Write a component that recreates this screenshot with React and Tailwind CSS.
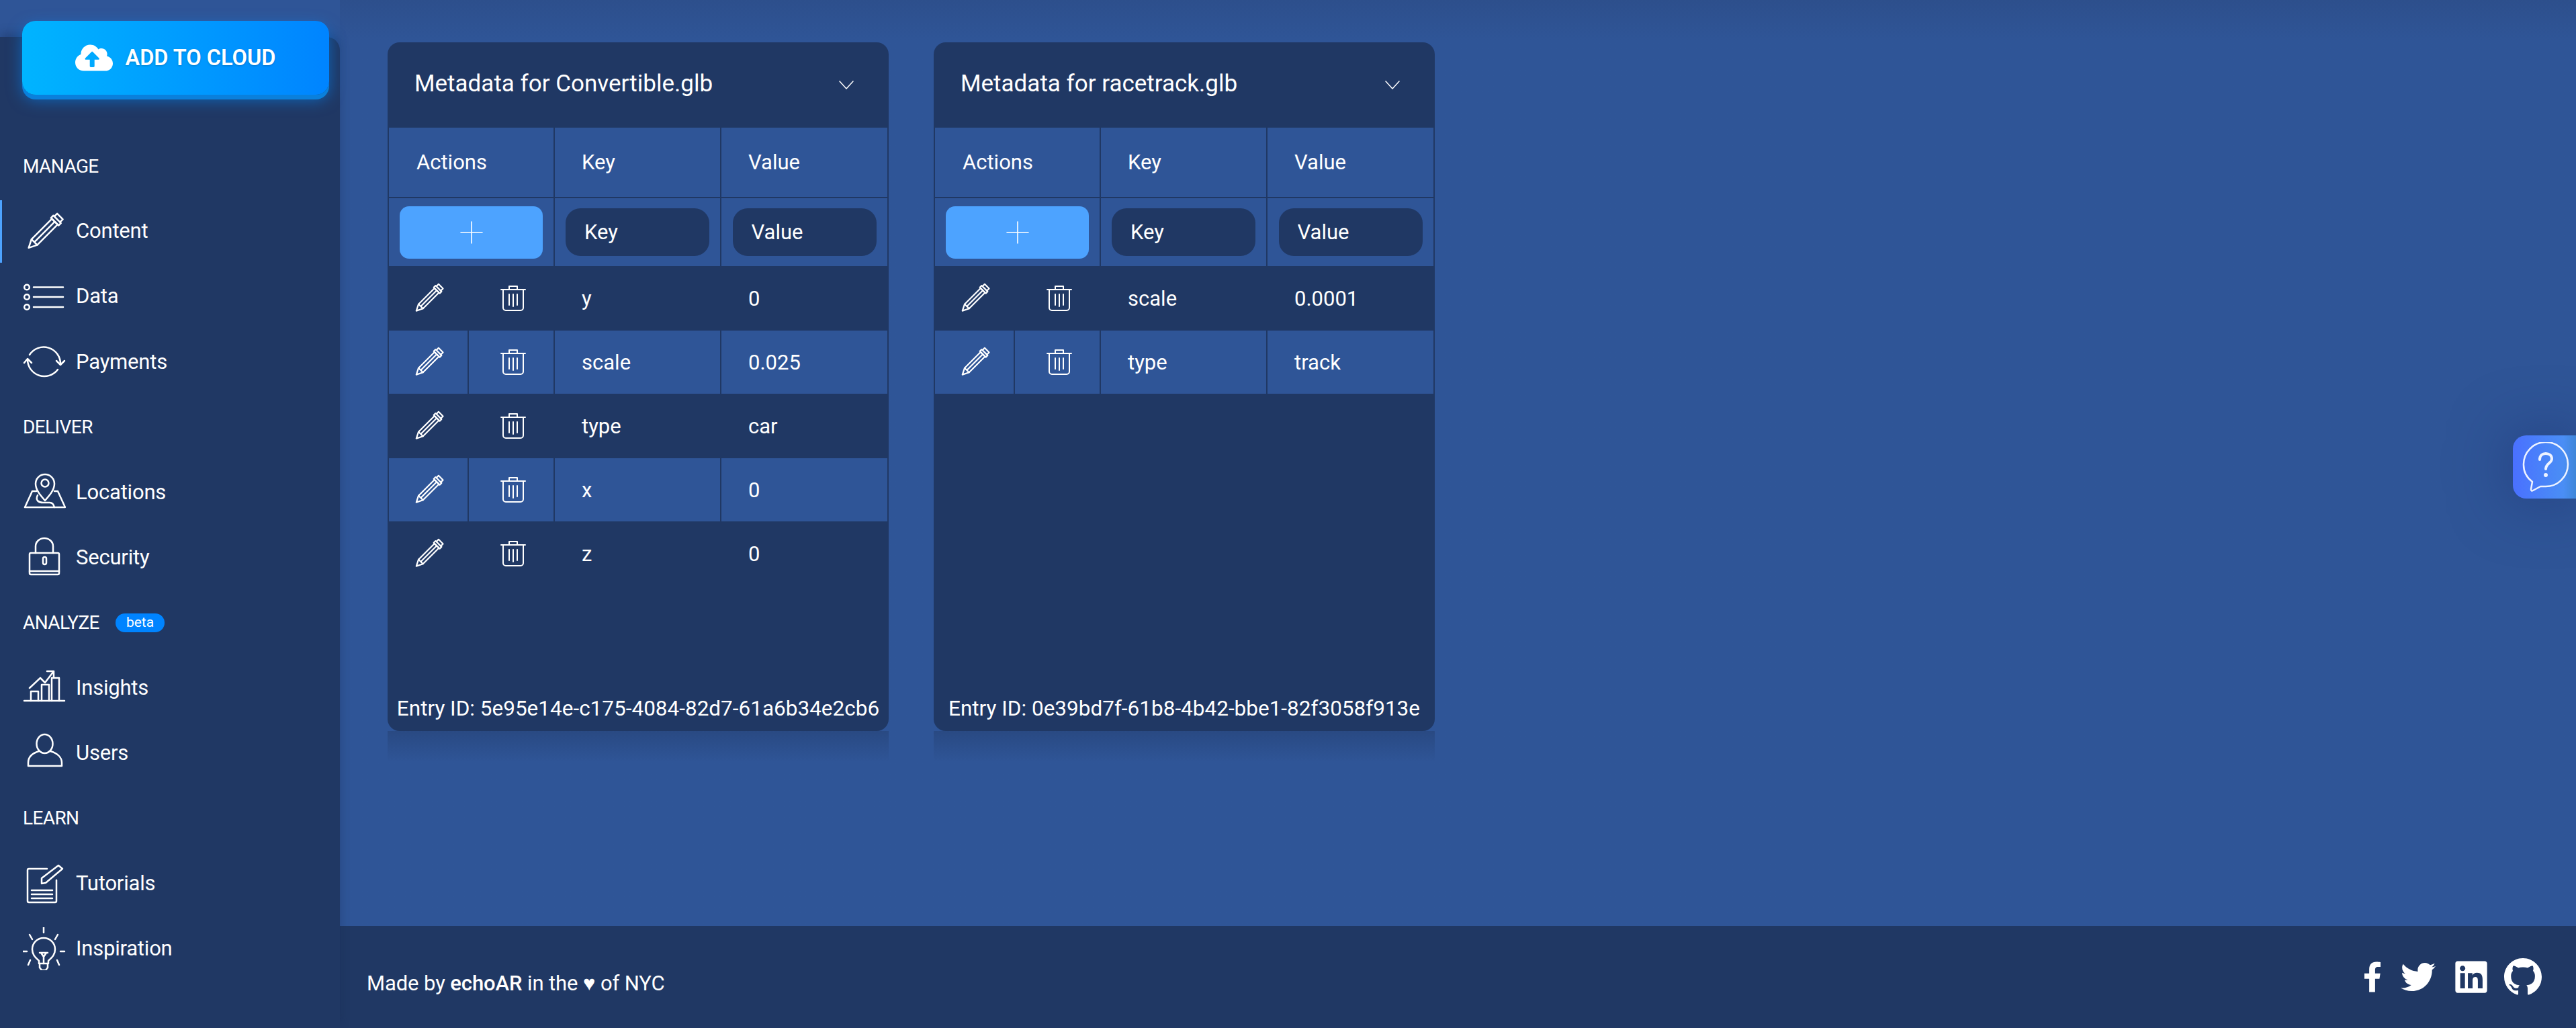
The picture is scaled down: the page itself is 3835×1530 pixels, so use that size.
import { FaCloudUploadAlt, FaFacebookF, FaTwitter, FaLinkedin } from "react-icons/fa";

const Stroke = ({ children, className = "w-[64px] h-[64px]", box = "0 0 64 64", width = 2.5 }) => (
  <svg
    className={className}
    viewBox={box}
    fill="none"
    stroke="currentColor"
    strokeWidth={width}
    strokeLinecap="round"
    strokeLinejoin="round"
  >
    {children}
  </svg>
);

const pencil = (
  <g transform="translate(32 32.5) rotate(45)">
    <path d="M-6 -22V21L0 33L6 21V-22Z" />
    <path d="M0 -22V21M-6 21H6" />
    <path d="M-8 -22H8V-27H-8Z" />
    <path d="M-6 -27V-33H6V-27" />
  </g>
);

const navIcons = {
  content: <Stroke>{pencil}</Stroke>,
  data: (
    <Stroke>
      <circle cx="6" cy="17.5" r="3.8" />
      <circle cx="6" cy="32" r="3.8" />
      <circle cx="6" cy="47" r="3.8" />
      <path d="M16 17.5H60M16 32H60M16 47H60" />
    </Stroke>
  ),
  payments: (
    <Stroke>
      <path d="M10 21A25 25 0 0 1 56 35M50 30L56 36L62 30" />
      <path d="M52 43A25 25 0 0 1 7 28M2 33L7 27L13 33" />
    </Stroke>
  ),
  locations: (
    <Stroke>
      <path d="M33 44C26 36 19 28 19 19A14 14 0 0 1 47 19C47 28 40 36 33 44Z" />
      <circle cx="33" cy="18" r="5.5" />
      <path d="M20 30H14L3 54H63L52 30H47" />
      <path d="M22 36C18 44 24 47 30 47H40C44 47 46 50 47 54" />
    </Stroke>
  ),
  security: (
    <Stroke>
      <path d="M19 25V15A13 12 0 0 1 45 15V25" />
      <rect x="10" y="25" width="44" height="32" rx="2" />
      <path d="M10 52H54" />
      <rect x="30" y="31" width="5" height="11" rx="2.5" />
    </Stroke>
  ),
  insights: (
    <Stroke>
      <path d="M2 51H62" />
      <path d="M12 51V37H23V51M28 51V27H39V51M43 51V17H54V51" />
      <path d="M10 32L26 17L33 24L46 7M36 7H46V17" />
    </Stroke>
  ),
  users: (
    <Stroke>
      <ellipse cx="32.5" cy="18" rx="12" ry="14" />
      <path d="M24 29C14 32 8 38 8 46V51H58V46C58 38 51 32 41 29" />
    </Stroke>
  ),
  tutorials: (
    <Stroke>
      <path d="M36 10H9A2 2 0 0 0 7 12V58A2 2 0 0 0 9 60H48A2 2 0 0 0 50 58V27" />
      <path d="M28 32V24L53 5L59 10L34 31Z" />
      <path d="M13 42H44M13 48H44M13 54H44" />
    </Stroke>
  ),
  inspiration: (
    <Stroke>
      <path d="M31 0V8M10 11L14 18M52 11L48 18M0 36H6M56 36H62M8 56L11 49M54 56L51 49" />
      <path d="M24 54V50C20 46 14 42 14 33A17 17 0 0 1 48 33C48 42 42 46 38 50V54Z" />
      <path d="M25 38H37M27 38L31 44L35 38M31 44V54M25 54V60L28 64H34L37 60V54" />
    </Stroke>
  ),
};

const sidebar = [
  { heading: "MANAGE" },
  { id: "content", label: "Content", active: true },
  { id: "data", label: "Data" },
  { id: "payments", label: "Payments" },
  { heading: "DELIVER" },
  { id: "locations", label: "Locations" },
  { id: "security", label: "Security" },
  { heading: "ANALYZE", beta: true },
  { id: "insights", label: "Insights" },
  { id: "users", label: "Users" },
  { heading: "LEARN" },
  { id: "tutorials", label: "Tutorials" },
  { id: "inspiration", label: "Inspiration" },
];

function Sidebar() {
  return (
    <aside className="relative z-10 w-[506px] shrink-0 mt-[55px] bg-[#203864] rounded-tr-[20px] shadow-[0_-6px_14px_rgba(20,40,80,0.35)]">
      <button className="flex items-center justify-center gap-[18px] w-[457px] h-[110px] ml-[33px] -mt-[24px] mb-[58px] rounded-[20px] bg-gradient-to-r from-[#00b4ff] to-[#0084ff] text-white font-semibold text-[32.5px] shadow-[0_7px_0_#0a80dc,0_8px_22px_rgba(0,140,255,0.55)] [text-shadow:0_1px_3px_rgba(0,0,0,0.2)]">
        <FaCloudUploadAlt className="w-[56px] h-[56px]" />
        ADD TO CLOUD
      </button>
      <div className="flex flex-col text-white">
        {sidebar.map((item) =>
          item.heading ? (
            <div key={item.heading} className="flex items-center h-[97.08px] pl-[34px] text-[28px] font-normal tracking-[-0.6px]">
              {item.heading}
              {item.beta && (
                <span className="flex items-center ml-[24px] h-[28px] px-[16px] rounded-full bg-[#0084ff] text-[21px] font-normal tracking-normal">
                  beta
                </span>
              )}
            </div>
          ) : (
            <div
              key={item.id}
              className={`flex items-center h-[97.08px] pl-[34px] text-[31px] font-normal tracking-[-0.2px] relative ${
                item.active ? "before:absolute before:left-0 before:top-[2px] before:bottom-[2px] before:w-[3px] before:bg-[#4da3ff]" : ""
              }`}
            >
              {navIcons[item.id]}
              <span className="ml-[15px]">{item.label}</span>
            </div>
          )
        )}
      </div>
    </aside>
  );
}

const RowPencil = () => (
  <Stroke className="w-[50px] h-[50px]" width={2.8}>
    {pencil}
  </Stroke>
);

const RowTrash = () => (
  <Stroke className="w-[38px] h-[40px]" box="0 0 38 40" width={2}>
    <path d="M1 7H37M13 7V2H25V7" />
    <path d="M4 7V34A4 4 0 0 0 8 38H30A4 4 0 0 0 34 34V7" />
    <path d="M13 14V30M19 14V32M25 14V30" />
  </Stroke>
);

function MetadataCard({ file, rows, entryId }) {
  return (
    <section className="relative w-[746px] h-[1025px] flex flex-col rounded-[18px] bg-[#203864]">
      <header className="flex items-center justify-between h-[125px] pl-[40px] pr-[52px] shrink-0 text-[35px] font-normal">
        <span>Metadata for {file}</span>
        <Stroke className="w-[22px] h-[14px]" box="0 0 22 14" width={1.5}>
          <path d="M1 2L11 13L21 2" />
        </Stroke>
      </header>
      <table className="w-full table-fixed border-separate border-spacing-[2px] text-[31px]">
        <colgroup>
          <col className="w-[117px]" />
          <col className="w-[126px]" />
          <col className="w-[246px]" />
          <col />
        </colgroup>
        <thead>
          <tr className="h-[103px] bg-[#2f5597]">
            <th colSpan={2} className="pl-[41px] pt-[2px] text-left font-normal">Actions</th>
            <th className="pl-[40px] pt-[2px] text-left font-normal">Key</th>
            <th className="pl-[40px] pt-[2px] text-left font-normal">Value</th>
          </tr>
          <tr className="h-[101px] bg-[#2f5597]">
            <th colSpan={2} className="px-[15px] font-normal">
              <button className="flex items-center justify-center w-[213px] h-[78px] ml-[1px] rounded-[14px] bg-[#4da3ff]">
                <Stroke className="w-[34px] h-[34px]" box="0 0 34 34" width={1.6}>
                  <path d="M17 1V33M1 17H33" />
                </Stroke>
              </button>
            </th>
            <th className="px-[16px] font-normal">
              <input
                placeholder="Key"
                className="w-[214px] h-[71px] pl-[28px] rounded-[22px] bg-[#203864] font-normal placeholder:text-white outline-none"
              />
            </th>
            <th className="px-[16px] font-normal">
              <input
                placeholder="Value"
                className="w-[214px] h-[71px] pl-[28px] rounded-[22px] bg-[#203864] font-normal placeholder:text-white outline-none"
              />
            </th>
          </tr>
        </thead>
        <tbody>
          {rows.map(([key, value], i) => (
            <tr key={key} className={i % 2 === 0 ? "h-[92px]" : "h-[94px] bg-[#2f5597]"}>
              <td>
                <div className="flex justify-center"><RowPencil /></div>
              </td>
              <td>
                <div className="flex justify-center pl-[6px]"><RowTrash /></div>
              </td>
              <td className="pl-[40px] pt-[2px]">{key}</td>
              <td className="pl-[40px] pt-[2px]">{value}</td>
            </tr>
          ))}
        </tbody>
      </table>
      <p className="mt-auto pb-[10px] text-center text-[31.5px]">Entry ID: {entryId}</p>
      {/* soft drop shade under the card */}
      <div className="absolute top-full inset-x-0 h-[46px] bg-gradient-to-b from-[#203864]/40 to-transparent" />
    </section>
  );
}

function Footer() {
  return (
    <footer className="flex items-center justify-between h-[152px] shrink-0 bg-[#203864] pl-[40px] pr-[51px] pt-[20px] text-[31px] font-normal">
      <span className="tracking-[-0.1px]">
        Made by <span className="font-medium">echoAR</span> in the ♥ of NYC
      </span>
      <div className="flex items-center gap-[24px] -mt-[20px]">
        <FaFacebookF className="w-[28px] h-[48px]" />
        <FaTwitter className="w-[60px] h-[52px]" />
        <FaLinkedin className="w-[50px] h-[54px]" />
        <svg className="w-[56px] h-[56px]" viewBox="0 0 16 16" fill="currentColor">
          <path d="M8 0C3.58 0 0 3.58 0 8c0 3.54 2.29 6.53 5.47 7.59.4.07.55-.17.55-.38 0-.19-.01-.82-.01-1.49-2.01.37-2.53-.49-2.69-.94-.09-.23-.48-.94-.82-1.13-.28-.15-.68-.52-.01-.53.63-.01 1.08.58 1.23.82.72 1.21 1.87.87 2.33.66.07-.52.28-.87.51-1.07-1.78-.2-3.64-.89-3.64-3.95 0-.87.31-1.59.82-2.15-.08-.2-.36-1.02.08-2.12 0 0 .67-.21 2.2.82.64-.18 1.32-.27 2-.27.68 0 1.36.09 2 .27 1.53-1.04 2.2-.82 2.2-.82.44 1.1.16 1.92.08 2.12.51.56.82 1.27.82 2.15 0 3.07-1.87 3.75-3.65 3.95.29.25.54.73.54 1.48 0 1.07-.01 1.93-.01 2.2 0 .21.15.46.55.38A8.013 8.013 0 0016 8c0-4.42-3.58-8-8-8z" />
        </svg>
      </div>
    </footer>
  );
}

export default function App() {
  return (
    <div className="relative flex w-full h-screen overflow-hidden bg-[#2f5597] text-white font-['Roboto',sans-serif]">
      <Sidebar />
      <div className="flex-1 flex flex-col">
        <main className="flex-1 flex items-start gap-[67px] pt-[63px] pl-[71px] bg-gradient-to-b from-[#2d4f8c] to-[#2f5597] to-[60px]">
          <MetadataCard
            file="Convertible.glb"
            entryId="5e95e14e-c175-4084-82d7-61a6b34e2cb6"
            rows={[
              ["y", "0"],
              ["scale", "0.025"],
              ["type", "car"],
              ["x", "0"],
              ["z", "0"],
            ]}
          />
          <MetadataCard
            file="racetrack.glb"
            entryId="0e39bd7f-61b8-4b42-bbe1-82f3058f913e"
            rows={[
              ["scale", "0.0001"],
              ["type", "track"],
            ]}
          />
        </main>
        <Footer />
      </div>
      {/* help tab pinned over the right edge */}
      <div className="absolute top-[648px] right-0 w-[94px] h-[94px] flex items-center pl-[14px] rounded-l-[20px] bg-gradient-to-r from-[#4a70ff] via-[#4a8ef5] via-80% to-[#3f86d8] shadow-[0_0_90px_rgba(25,45,110,0.55)]">
        <svg className="w-[70px] h-[74px]" viewBox="0 0 70 74" fill="none" stroke="#eef3ff" strokeWidth="2.5" strokeLinecap="round" strokeLinejoin="round">
          <path d="M15 59C7 53 2 45 2 34A33 33 0 1 1 35 66H27L16 72C14 73 13 72 13 70Z" />
          <path d="M26 26C26 20 30 17 35 17C40 17 44 20 44 25C44 31 35 32 35 40" strokeWidth="4" />
          <circle cx="35" cy="49" r="1.5" fill="#eef3ff" strokeWidth="3" />
        </svg>
      </div>
    </div>
  );
}
